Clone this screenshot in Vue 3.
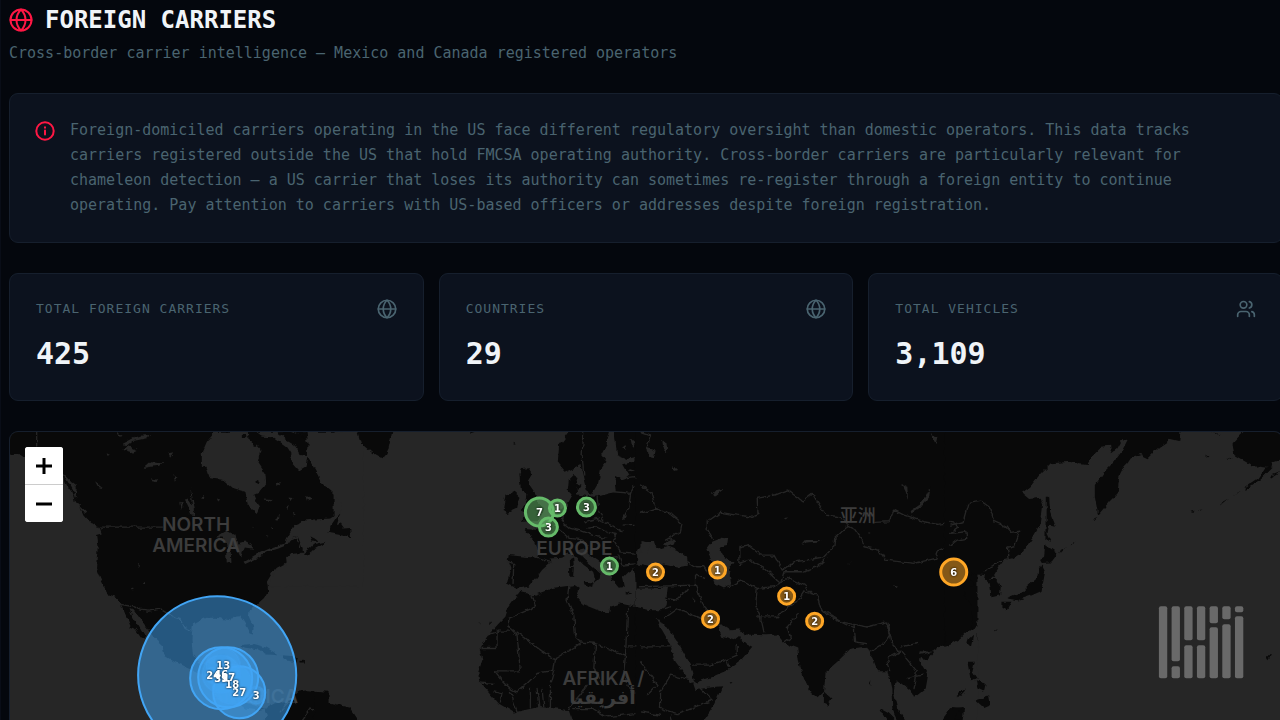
<script setup>
const stats = [
  { label: 'Total foreign carriers', value: '425', icon: 'globe' },
  { label: 'Countries', value: '29', icon: 'globe' },
  { label: 'Total vehicles', value: '3,109', icon: 'users' },
]

const markers = [
  { x: 217, y: 675, r: 79, tone: 'blue', text: '' },
  { x: 221, y: 678, r: 31, tone: 'blue', text: '39', dy: 1 },
  { x: 228, y: 677, r: 30, tone: 'blue', text: '17' },
  { x: 239, y: 692, r: 26, tone: 'blue', text: '27' },
  { x: 213, y: 675, r: 8, tone: 'blue', text: '24', soft: true },
  { x: 221, y: 674, r: 19, tone: 'blue', text: '46', soft: true },
  { x: 223, y: 665, r: 17, tone: 'blue', text: '13', soft: true },
  { x: 232, y: 684, r: 20, tone: 'blue', text: '18', soft: true },
  { x: 256, y: 695, r: 9, tone: 'blue', text: '3', soft: true },
  { x: 539, y: 512, r: 14, tone: 'green', text: '7' },
  { x: 557, y: 508, r: 8, tone: 'green', text: '1' },
  { x: 586, y: 507, r: 9, tone: 'green', text: '3' },
  { x: 548, y: 527, r: 9, tone: 'green', text: '3' },
  { x: 609, y: 566, r: 8, tone: 'green', text: '1' },
  { x: 655, y: 572, r: 8, tone: 'amber', text: '2' },
  { x: 717, y: 570, r: 8, tone: 'amber', text: '1' },
  { x: 786, y: 596, r: 8, tone: 'amber', text: '1' },
  { x: 710, y: 619, r: 8, tone: 'amber', text: '2' },
  { x: 814, y: 621, r: 8, tone: 'amber', text: '2' },
  { x: 953, y: 572, r: 13, tone: 'amber', text: '6' },
]

// Each tile uses its own coordinate space; dx and dy shift it on the world canvas.
const tiles = [
  {
    dx: 0,
    land: [
      'M20 10H1000V380L905 380 880 390 860 412 830 428 815 445 800 470 805 500 790 520 765 542 748 556 746 575 760 605 758 625 748 622 735 595 720 570 700 572 690 585 650 578 620 578 600 585 578 598 574 640 578 690 595 712 620 718 640 712 650 690 675 685 678 700 660 735 690 750 710 770 710 800 735 830 760 840 790 850 770 855 735 850 700 820 660 775 620 755 560 728 520 708 492 690 488 662 460 635 425 590 400 555 388 552 400 580 420 610 437 640 425 638 405 610 392 605 375 565 362 535 345 517 328 512 312 485 300 460 288 430 290 400 293 370 288 330 305 325 300 310 270 290 250 268 238 240 225 235 218 205 200 180 190 150 120 105 75 100 55 85 20 90Z',
      'M720 660L760 656 800 668 835 690 800 688 770 672 735 668Z',
      'M845 690L890 694 885 710 848 705Z',
      'M898 704h16v8h-16Z',
      'M790 850L820 835 865 830 895 800 920 795 985 800V900H780L800 870Z',
    ],
    water: [
      'M365 58L385 60 400 48 440 40 450 30 420 32 400 40 380 50ZM350 20L365 30 358 32ZM380 62L410 75 395 82 370 75Z',
      'M430 130L450 112 490 115 480 122 450 125Z',
      'M555 225L562 220 580 245 582 270 570 268 565 245ZM540 230L548 232 545 255ZM410 415L420 425 416 432ZM395 490L405 492 398 496ZM425 480L432 472 436 480Z',
      'M455 160L475 165 465 172ZM505 85L520 82 510 95ZM520 150L532 158 524 170ZM285 172L310 190 292 185ZM320 85L330 90 322 92Z',
      'M195 155L225 185 232 205 220 200ZM200 195L222 220 215 225ZM235 238L262 262 248 258Z',
      'M390 553L400 555 435 600 430 620 410 595Z',
    ],
    borders: ['M110 20V66', 'M300 306H490', 'M362 538L400 545 420 555 445 558 480 552 520 575 540 580 555 610 572 618', 'M840 860L860 835 890 830', 'M905 885L930 850 960 865 985 870', 'M190 150L215 175 228 185 225 215'],
  },
  {
    dx: 570,
    dy: 15,
    land: [],
    water: [
      'M75 5H170L172 20 200 45 214 60 205 100 225 130 228 160 205 188 190 195 207 235 200 252 185 240 172 220 165 185 130 175 100 150 60 145 50 115 35 110 35 70 50 35Z',
      'M195 5H520V470H235L245 445 262 415 290 405 288 385 300 372 340 368 335 350 322 318 308 320 290 345 265 355 235 365 200 385 165 402 160 395 195 375 250 350 285 340 290 325 310 290 335 272 370 268 420 265 450 245 452 215 430 190 395 160 375 120 352 82 345 110 325 122 305 100 303 70 290 50 250 22 215 20Z',
      'M75 322L110 302 135 315 145 340 165 334 188 346 188 356 164 352 152 382 142 362 120 342 124 398 110 400 108 375 112 342 100 322Z',
      'M220 208L248 210 232 216ZM345 195L370 205 350 212ZM255 270L266 250 262 272ZM308 245L316 250 312 260ZM298 202L310 204 302 214ZM228 315L235 318 230 322ZM240 292L248 295 242 299ZM260 160L275 155 262 168ZM288 230L296 225 290 240ZM30 205L42 190 38 207ZM80 205L90 208 84 214ZM190 290L198 294 192 297ZM0 170L15 240 8 250Z',
    ],
    islands: [
      'M450 248L440 285 452 280 462 295 480 294 482 325 465 318 415 308 425 285Z',
      'M338 370L372 342 405 335 400 342 365 362 350 374Z',
      'M358 318L375 326 386 336 365 334Z',
      'M258 5H300L345 20 352 40 350 78 328 75 312 45 290 32Z',
      'M310 5H352L355 30Z',
      'M155 12h10v12h-10ZM190 35h8v12h-8ZM195 155L206 148 202 165Z',
      'M500 5H520V20Z',
    ],
    borders: ['M290 330L318 320 328 352'],
  },
  {
    dx: 960,
    land: [
      'M108 10L122 55 155 83 190 103 205 70 218 10Z',
      'M755 10H870L858 60 842 90 858 110 842 130 833 175 815 205 800 202 790 165 780 120 760 130 735 140 712 112 716 62Z',
      'M880 10H1010V92L970 90 920 102 890 90 885 45Z',
      'M1010 105L950 108 905 118 915 135 930 148 910 165 888 150 883 180 886 200 850 210 820 215 795 212 770 208 768 180 775 160 760 150 745 165 742 195 755 212 742 235 720 255 700 270 685 300 655 302 655 315 610 312 628 332 645 350 655 385 650 398 610 395 565 390 562 410 570 430 560 475 590 490 625 485 645 462 665 435 690 412 688 400 725 398 745 385 765 395 790 420 818 440 825 465 818 478 838 460 840 445 805 415 785 395 772 375 790 370 815 395 845 415 868 440 875 465 895 488 910 485 905 460 925 440 945 430 960 400 960 375 1010 330Z',
      'M940 435L960 420 1010 420V495L965 490 948 470Z',
      'M597 150L605 132 625 130 636 148 622 172 645 205 652 235 672 250 655 285 600 287 620 270 605 258 615 230 618 205 602 195Z',
      'M550 258L558 212 580 200 597 215 590 250 560 264Z',
      'M565 545L598 500 640 510 700 488 765 480 778 488 768 515 785 535 865 567 870 545 900 535 1010 560V900H775L755 885 745 855 710 850 655 845 580 862 535 835 505 800 476 765 474 740 486 705 478 670 500 635 530 600 555 575Z',
      'M-15 795L20 830 90 848 118 890H-20Z',
      'M748 405L758 400 760 420 750 422ZM745 428L760 425 758 455 747 455Z',
      'M790 470L818 472 815 486 792 478ZM910 500L937 505 920 508ZM760 170L785 180 775 195Z',
      'M450 20L465 25 450 26ZM580 50L586 55 580 56ZM478 592L485 594 480 597ZM512 588L508 600 515 594Z',
    ],
    water: ['M905 68L915 60 918 75ZM930 40L945 55 935 65ZM955 25L975 40 960 50ZM840 840L850 838 848 855ZM1010 488L975 495 985 540 1010 545Z'],
    borders: ['M790 20L785 90 790 150', 'M560 410L580 415 578 475', 'M645 398L690 412', 'M635 510L645 545 600 565 565 580 565 605 690 695 705 700 780 655 765 630 760 570 740 525 745 485', 'M565 618H530V670H482', 'M565 605L590 630 600 740H525', 'M780 650L825 655 915 690 922 545', 'M705 700L700 735 650 745 620 775 590 800 570 790 545 765 525 740', 'M825 660L820 730 850 780', 'M925 665H1000', 'M915 690L910 740 930 800 985 800', 'M500 630L530 620M475 770L520 775M520 800L545 805 540 830M570 800L590 858M630 790V848M650 790L655 845M665 790L670 845M690 770L700 735M690 780V850M745 850L780 810 800 780', 'M740 235L730 265 725 290 750 310 790 320 830 335 860 340', 'M830 215L835 260 850 285', 'M700 300L735 330 750 340 790 345 800 360', 'M790 290L830 280 870 300 905 320M800 310L830 305 860 320', 'M880 200L930 205 940 185 985 180M905 160L940 155 960 160M905 300L990 295M860 320L890 325 880 345 900 380 950 385', 'M895 390L905 420 960 415M850 400L890 395M850 420L880 440M925 250L930 205M925 135L955 140M910 280L925 250M760 850L820 850 860 875 990 860'],
  },
  {
    dx: 1920,
    land: ['M-15 10H1010V640L950 900H-15Z'],
    water: [
      'M-10 375L15 348 40 348 42 358 62 372 85 365 110 375 140 398 142 422 115 426 70 415 30 426-10 418Z',
      'M68 360L88 342 105 345 100 358 80 365Z',
      'M197 375L215 350 245 338 263 340 260 360 235 365 250 395 282 412 265 430 272 478 250 487 225 475 212 440 215 410Z',
      'M-15 490L40 490 82 486 75 540 65 555 30 555-15 545Z',
      'M42 572L58 592 75 598 110 650 150 720 160 765 152 772 128 740 105 710 85 650 62 610Z',
      'M180 900L215 850 245 783 200 788 165 795 158 775 215 755 260 735 305 700 335 665 305 650 298 630 280 645 245 635 230 598 245 598 270 615 300 612 310 628 375 630 410 628 432 655 470 670 475 710 490 760 510 805 530 820 550 800 555 740 590 710 630 670 680 665 700 710 712 738 740 738 752 790 755 850 780 900Z',
      'M1010 600L950 640 905 660 875 680 840 678 835 705 862 750 855 790 820 818 810 795 785 775 765 768 758 800 770 850 800 900H1010Z',
      'M20 65L45 75 40 100 25 95ZM65 45L78 55 80 80 68 65ZM95 120L110 135 100 138Z',
      'M868 188L866 215 840 248 812 265 810 258 838 238 855 215Z',
      'M482 360L495 345 540 345 530 350 498 352ZM215 205L225 195 250 192 220 215ZM785 180L800 185 802 225 795 200ZM870 25L890 35 885 58ZM0 345L30 350 20 380 0 385ZM430 282L440 280 436 288ZM760 480L775 485 768 490ZM155 520L165 525 160 530ZM625 410L630 414 624 415ZM680 318L690 320 682 322Z',
    ],
    islands: ['M550 800L572 820 565 842 550 835Z', 'M715 848L745 865 775 895 740 890ZM905 885L935 845 970 850 965 890ZM835 690L880 680 860 705ZM950 810L975 790 960 812ZM268 770L276 772 270 776ZM685 780L692 765 690 780Z'],
    borders: [
      'M200 315L200 290 240 262 290 270 330 275 352 265 350 220 400 210 440 195 485 228 515 205 555 270 600 275 620 300 640 310 665 345 670 365 715 375 735 405 820 415 885 400 895 375 975 342 940 320 940 290 890 298 850 290 790 270 760 255 745 290 700 292',
      'M200 315L215 340 M295 415V368L325 362 360 390 400 390 425 435 460 410 500 405 550 395 580 365 582 340 620 305',
      'M295 415L325 405 370 430 420 475 430 440 480 440 530 425 555 400',
      'M265 485L300 465 350 490 345 540 360 575 370 620M350 575L410 575 440 545 470 530 490 500 530 510 540 550 600 590 680 605M350 490L400 485 440 460 490 480 520 510',
      'M540 550L560 570 640 610M640 600L645 650 675 655M680 605L740 590 750 625 730 655 690 680M740 600L750 650 780 680 740 700 750 740M780 680L830 740 820 790M780 665L830 655M800 760L845 750M440 605L450 640 430 655M470 570L440 605',
      'M142 410L165 425 190 425 200 440M140 480L165 480 190 545 235 595M0 485L165 480 165 450 190 460M75 575L110 550 180 580M75 520L110 525 140 490M75 550L90 545',
      'M0 665H90M158 720L205 720 255 705 290 690 290 660M260 705L265 725M60 800L90 750 155 765 215 825 150 850 110 865 60 850ZM0 860L60 870M90 870L95 885M0 710L50 780 25 805',
      'M0 180L30 200 45 250 90 265 125 295 120 320 75 345M0 20L30 30 20 70M990 240L960 290 935 325M0 265L45 250',
    ],
  },
  {
    dx: 2850,
    land: [
      'M-20 10H690L685 48 660 42 625 65 590 100 570 90 540 100 530 115 520 125 505 155 500 205 475 230 442 270 432 215 432 180 460 140 490 110 512 80 530 45 515 42 500 70 480 85 478 62 450 65 430 85 412 120 385 118 360 110 300 115 270 145 238 185 213 204 235 222 270 218 277 240 270 295 248 335 210 385 185 400 160 405 145 425 130 450 150 485 148 510 122 516 118 475 103 465 105 450 75 448 60 440 55 460 75 478 40 485 42 510 65 545 68 580 60 610 30 640 0 658-20 665Z',
      'M285 215L295 215 298 260 315 305 295 300 290 325 302 350 284 345Z',
      'M283 358L320 385 300 412 270 414 265 405 280 395Z',
      'M272 418L283 440 272 498 240 512 200 525 170 520 210 505 230 485 258 460 264 435Z',
      'M155 530L182 530 168 555 155 548ZM185 525L205 520 205 530Z',
      'M845 55L870 28 890 10H1000V100L965 112 960 130 925 125 915 128 880 108 850 90Z',
      'M965 125L935 155 910 178 880 195 882 185 920 160 940 130ZM872 195L850 212 855 206ZM832 220L810 238 815 230ZM755 250L740 257 745 252ZM722 260L730 258 728 264ZM830 98L845 100 838 105ZM990 140L960 160 965 150ZM760 88L775 96 770 97Z',
      'M440 275L425 290 430 280ZM375 348L355 365 360 358ZM345 365L325 385 330 375ZM540 195L548 205ZM612 237L618 242ZM780 20L810 30 795 28Z',
      'M55 640L68 628 60 665 50 655ZM50 710L72 710 65 740 78 760 60 765ZM75 765L105 775 100 800 80 790ZM75 825L115 810 120 840 100 848ZM20 815L45 790 40 800ZM0 850L35 845 10 880 40 890H-20ZM130 615L138 612 132 618ZM945 690L960 690 952 702ZM923 672L930 675ZM940 680L947 683Z',
    ],
    water: [],
    borders: ['M0 300L40 290 55 235 90 228 115 245 130 290 165 305 180 322 207 318 190 365 170 370 175 400 155 405 100 440', 'M0 292L15 295 20 310 0 325 45 320 48 340 20 345 0 360', 'M118 460L145 460'],
  },
]

const bars = [
  [0, 0, 216], [1, 0, 165], [1, 180, 36], [2, 0, 102], [2, 117, 99], [3, 0, 102],
  [3, 117, 99], [4, 0, 51], [4, 63, 153], [5, 0, 39], [5, 54, 162], [6, 0, 18], [6, 30, 186],
]
</script>

<template>
  <main class="page">
    <header class="head">
      <h1>
        <svg class="globe" viewBox="0 0 24 24" aria-hidden="true">
          <circle cx="12" cy="12" r="10.5" /><path d="M12 1.5c-6 6-6 15 0 21c6-6 6-15 0-21M1.5 12h21" />
        </svg>
        FOREIGN CARRIERS
      </h1>
      <p>Cross-border carrier intelligence — Mexico and Canada registered operators</p>
    </header>

    <section class="notice">
      <svg viewBox="0 0 20 20" aria-hidden="true">
        <circle cx="10" cy="10" r="8.7" /><path d="M10 9.5v4M10 6.2v.6" />
      </svg>
      <p>Foreign-domiciled carriers operating in the US face different regulatory oversight than domestic operators. This data tracks carriers registered outside the US that hold FMCSA operating authority. Cross-border carriers are particularly relevant for chameleon detection — a US carrier that loses its authority can sometimes re-register through a foreign entity to continue operating. Pay attention to carriers with US-based officers or addresses despite foreign registration.</p>
    </section>

    <section class="stats">
      <article v-for="s in stats" :key="s.label" class="stat">
        <div class="row">
          <h2>{{ s.label }}</h2>
          <svg v-if="s.icon === 'globe'" viewBox="0 0 24 24" aria-hidden="true">
            <circle cx="12" cy="12" r="10.5" /><path d="M12 1.5c-6 6-6 15 0 21c6-6 6-15 0-21M1.5 12h21" />
          </svg>
          <svg v-else viewBox="0 0 24 24" aria-hidden="true">
            <path d="M16 21v-2a4 4 0 0 0-4-4H6a4 4 0 0 0-4 4v2M22 21v-2a4 4 0 0 0-3-3.87M16 3.13a4 4 0 0 1 0 7.75" /><circle cx="9" cy="7" r="4" />
          </svg>
        </div>
        <strong>{{ s.value }}</strong>
      </article>
    </section>

    <section class="map" aria-label="Carrier locations">
      <svg class="world" viewBox="10 432 1271 288" preserveAspectRatio="xMidYMin slice">
        <defs>
          <filter id="coast" x="0" y="0" width="1" height="1" color-interpolation-filters="sRGB">
            <feTurbulence type="fractalNoise" baseFrequency="0.16" numOctaves="2" seed="4" />
            <feDisplacementMap in="SourceGraphic" scale="5" xChannelSelector="R" yChannelSelector="G" />
          </filter>
        </defs>
        <g filter="url(#coast)">
          <rect class="sea" x="0" y="420" width="1300" height="310" />
          <g transform="translate(0 425) scale(0.33333)">
            <g v-for="t in tiles" :key="t.dx" :transform="`translate(${t.dx} ${t.dy || 0})`">
              <path v-for="d in t.land" :key="d" class="land" :d="d" />
              <path v-for="d in t.water" :key="d" class="sea" :d="d" />
              <path v-for="d in t.islands || []" :key="d" class="land" :d="d" />
              <path v-for="d in t.borders" :key="d" class="border" :d="d" />
            </g>
          </g>
        </g>
        <g class="region">
          <text x="196" y="531">NORTH</text>
          <text x="196" y="552">AMERICA</text>
          <text x="574" y="555">EUROPE</text>
          <text x="603" y="685">AFRIKA /</text>
          <text x="602" y="704" class="arabic">أفريقيا</text>
          <text x="857" y="522" class="han">亚洲</text>
          <text x="254" y="703">AMERICA</text>
        </g>
        <g v-for="(m, i) in markers" :key="i" :class="['pin', m.tone, { soft: m.soft }]">
          <circle :cx="m.x" :cy="m.y" :r="m.r" />
        </g>
        <g class="counts">
          <text v-for="(m, i) in markers" :key="i" :x="m.x" :y="m.y + 4">{{ m.text }}</text>
        </g>
        <g class="logo" transform="translate(1158 606) scale(0.33333)">
          <rect v-for="(b, i) in bars" :key="i" :x="b[0] * 38" :y="b[1]" width="25" :height="b[2]" rx="6" />
        </g>
      </svg>
      <div class="zoom">
        <button type="button" aria-label="Zoom in"><svg viewBox="0 0 16 16"><path d="M0 8h16M8 0v16" /></svg></button>
        <button type="button" aria-label="Zoom out"><svg viewBox="0 0 16 16"><path d="M0 8h16" /></svg></button>
      </div>
    </section>
  </main>
</template>

<style>
body { background: #04070d; }
#app { overflow: hidden; }
</style>

<style scoped>
* { box-sizing: border-box; margin: 0; }
.page {
  display: flex;
  flex-direction: column;
  height: 100vh;
  margin-right: -3px;
  padding: 4px 0 0 8px;
  border-left: 1px solid #090d17;
  overflow: hidden;
  color: #4a6470;
  font-family: "DejaVu Sans Mono", "Liberation Mono", monospace;
}
h1 {
  display: flex;
  align-items: center;
  gap: 12px;
  color: #f0f4f8;
  font-size: 24px;
  line-height: 32px;
}
svg { fill: none; stroke: currentColor; stroke-width: 2; stroke-linecap: round; stroke-linejoin: round; flex: none; }
.globe { width: 24px; height: 24px; color: #ff1744; }
.head p { margin-top: 5px; font-size: 15px; line-height: 24px; }
.notice, .stat {
  background: #0c121e;
  border: 1px solid #161f2d;
  border-radius: 9px;
}
.notice { display: flex; gap: 15px; margin-top: 28px; padding: 24px 25px; }
.notice svg { width: 20px; height: 20px; margin-top: 3px; color: #ff1744; }
.notice p { max-width: 1130px; font-size: 15px; line-height: 25px; }
.stats { display: grid; grid-template-columns: repeat(3, 1fr); gap: 15px; margin-top: 30px; }
.stat { height: 128px; padding: 25px 26px; }
.row { display: flex; justify-content: space-between; align-items: center; }
.row svg { width: 20px; height: 20px; }
h2 { font-size: 13px; font-weight: 400; line-height: 20px; letter-spacing: 1px; text-transform: uppercase; }
.stat strong { display: block; margin-top: 17px; color: #f0f4f8; font-size: 30px; line-height: 36px; }
.map {
  position: relative;
  flex: 1;
  min-height: 0;
  margin-top: 30px;
  border: 1px solid #161f2d;
  border-bottom: 0;
  border-radius: 9px 9px 0 0;
  background: #262626;
  overflow: hidden;
}
.world { display: block; width: 100%; height: 100%; stroke: none; }
.sea { fill: #262626; }
.land { fill: #090909; }
.border { stroke: #262626; stroke-width: 4; }
.region { fill: #3c3c3c; font-family: Inter, "Open Sans", sans-serif; font-size: 19px; font-weight: 600; text-anchor: middle; }
.arabic { font-family: "DejaVu Sans", sans-serif; font-weight: 700; }
.han { font-family: "Noto Sans CJK SC", sans-serif; font-size: 18px; font-weight: 500; }
.pin circle { stroke: currentColor; stroke-width: 2; fill: currentColor; fill-opacity: 0.5; }
.pin.green circle, .pin.amber circle { stroke-width: 3; }
.pin.soft circle { stroke-opacity: 0.25; fill-opacity: 0.35; }
.blue { color: #42a5f5; }
.green { color: #66bb6a; }
.amber { color: #ffa726; }
.counts { fill: #fff; font-family: "DejaVu Sans Condensed", "DejaVu Sans", sans-serif; font-size: 11px; font-weight: 700; text-anchor: middle; filter: drop-shadow(0 0 1px #000); }
.logo { fill: #696969; }
.zoom { position: absolute; top: 15px; left: 15px; width: 38px; border-radius: 3px; background: #fff; overflow: hidden; }
.zoom button {
  display: flex;
  align-items: center;
  justify-content: center;
  width: 100%;
  height: 37px;
  border: 0;
  background: #fff;
  color: #000;
}
.zoom button + button { height: 38px; border-top: 1px solid #ccc; }
.zoom svg { width: 16px; height: 16px; stroke-width: 3; stroke-linecap: butt; }
</style>
